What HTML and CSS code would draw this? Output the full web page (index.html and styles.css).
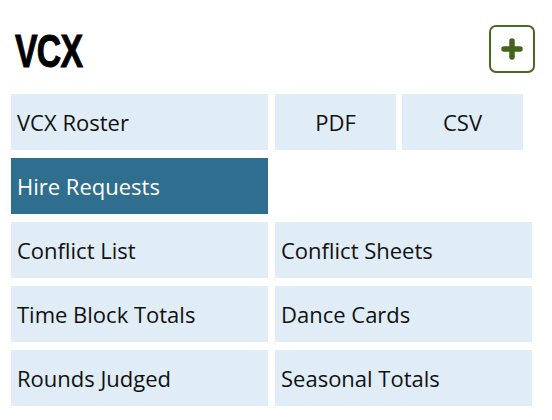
FILE: index.html
```html
<!DOCTYPE html>
<html>
<head>
<meta charset="utf-8">
<link rel="stylesheet" href="styles.css">
</head>
<body>
<div class="page">
  <header class="head">
    <h1 class="title">VCX</h1>
    <button class="add" aria-label="Add">
      <svg width="22" height="22" viewBox="0 0 22 22"><path d="M11 3 V19 M3 11 H19" stroke="#44631b" stroke-width="5.5" stroke-linecap="round" fill="none"/></svg>
    </button>
  </header>
  <div class="grid">
    <a class="item">VCX Roster</a>
    <div class="pair">
      <a class="item center">PDF</a>
      <a class="item center">CSV</a>
    </div>
    <a class="item active">Hire Requests</a>
    <div></div>
    <a class="item">Conflict List</a>
    <a class="item">Conflict Sheets</a>
    <a class="item">Time Block Totals</a>
    <a class="item">Dance Cards</a>
    <a class="item">Rounds Judged</a>
    <a class="item">Seasonal Totals</a>
  </div>
</div>
</body>
</html>
```
FILE: styles.css
```css
html, body { margin: 0; background: #fff; }
.page { width: 521px; padding: 25px 0 0 11px; font-family: "Open Sans", sans-serif; }
.head { display: flex; justify-content: space-between; align-items: center; height: 48px; margin-bottom: 21px; }
.title { margin: 3px 0 0 4px; font-family: "Liberation Sans", Arial, sans-serif; font-weight: bold; font-size: 47px; line-height: 1; letter-spacing: -1px; color: #000; -webkit-text-stroke: 1px #000; transform: scaleX(0.72); transform-origin: left center; }
.add { width: 46px; height: 48px; margin-right: -3px; padding: 0; border: 2px solid #4a6a22; border-radius: 7px; background: #fff; display: flex; align-items: center; justify-content: center; }
.grid { display: grid; grid-template-columns: 257px 257px; column-gap: 7px; row-gap: 8px; grid-auto-rows: 56px; }
.pair { display: flex; gap: 6px; }
.item { display: flex; align-items: center; padding-left: 6px; background: #e0edf6; color: #111; font-size: 22px; text-decoration: none; }
.pair .item { width: 121px; padding: 0; justify-content: center; }
.active { background: #2f6e8f; color: #fff; }
```
